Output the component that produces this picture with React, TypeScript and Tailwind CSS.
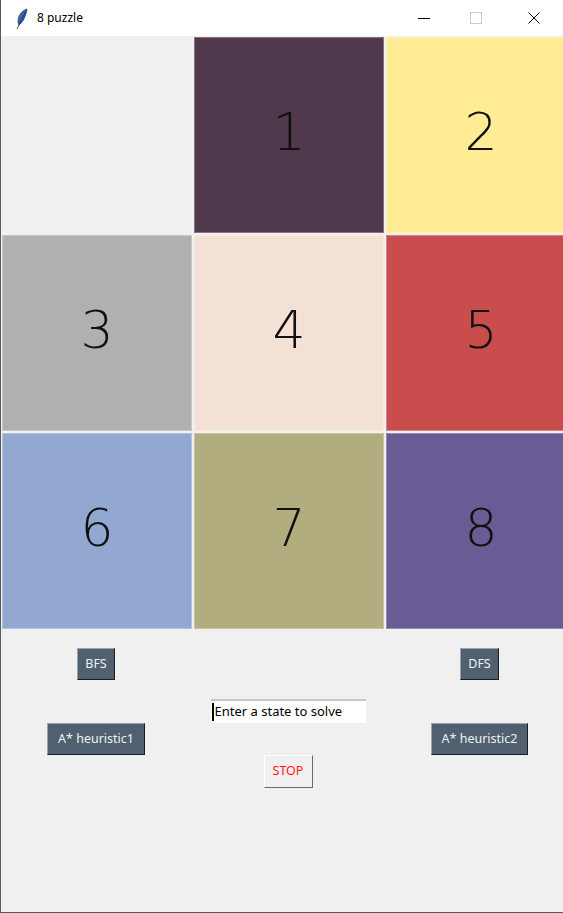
import React from "react";

const tiles: { n: string; bg: string }[] = [
  { n: "", bg: "bg-[#f0f0f0]" },
  { n: "1", bg: "bg-[#50394c]" },
  { n: "2", bg: "bg-[#ffec94]" },
  { n: "3", bg: "bg-[#b0b0b0]" },
  { n: "4", bg: "bg-[#f4e1d5]" },
  { n: "5", bg: "bg-[#c94d4d]" },
  { n: "6", bg: "bg-[#93a8d1]" },
  { n: "7", bg: "bg-[#b1ad7e]" },
  { n: "8", bg: "bg-[#6b5b95]" },
];

function Feather() {
  return (
    <svg width="14" height="22" viewBox="0 0 14 22">
      <path d="M12 1 C6 3 3 8 3 14 L4 17 C8 14 11 8 12 1 Z" fill="#3a68ad" stroke="#1f3f70" strokeWidth="0.8" />
      <path d="M11 3 L3 19" stroke="#1a2f55" strokeWidth="0.9" />
      <path d="M3 19 L2 21" stroke="#555" strokeWidth="1" />
    </svg>
  );
}

function TitleBar() {
  return (
    <div className="h-[36px] bg-white flex items-center relative">
      <div className="ml-[14px] mt-[1px]">
        <Feather />
      </div>
      <span className="ml-[8px] text-[12px] text-black font-sans">8 puzzle</span>
      <div className="ml-auto flex items-center h-full">
        <div className="w-[46px] flex justify-center">
          <div className="w-[12px] h-px bg-black" />
        </div>
        <div className="w-[58px] flex justify-center">
          <div className="w-[12px] h-[12px] border border-[#cccccc]" />
        </div>
        <div className="w-[58px] flex justify-center">
          <svg width="12" height="12" viewBox="0 0 12 12">
            <path d="M0.5 0.5 L11.5 11.5 M11.5 0.5 L0.5 11.5" stroke="#000" strokeWidth="1" />
          </svg>
        </div>
      </div>
    </div>
  );
}

function DarkButton({ label, w }: { label: string; w: string }) {
  return (
    <div
      className={`${w} h-[32px] bg-[#506070] border-[1.5px] border-t-[#9aa4ae] border-l-[#9aa4ae] border-b-[#1c1c1c] border-r-[#1c1c1c] flex items-center justify-center text-[12.5px] text-[#eef2f5] font-sans`}
    >
      {label}
    </div>
  );
}

export default function App() {
  return (
    <div className="w-[563px] h-[913px] overflow-hidden bg-[#f0f0f0] border-l border-b border-[#5a5a5a] flex flex-col">
      <TitleBar />
      <div className="grid grid-cols-[192px_192px_192px] w-[576px]">
        {tiles.map((t, i) => (
          <div key={i} className="h-[198px] p-px">
            <div
              className={`${t.bg} h-full pb-[6px] ${t.n ? "border border-[#ffffff]/30" : ""} flex items-center justify-center text-[52px] text-[#111] font-['DejaVu_Sans'] font-extralight leading-none`}
            >
              {t.n}
            </div>
          </div>
        ))}
      </div>
      <div className="grid grid-cols-[192px_192px_192px] w-[576px]">
        <div className="flex flex-col items-center pt-[18px] gap-[43px] -ml-[2px]">
          <DarkButton label="BFS" w="w-[38px]" />
          <DarkButton label="A* heuristic1" w="w-[98px]" />
        </div>
        <div className="flex flex-col items-center pt-[69px] -ml-[2px]">
          <div className="w-[155px] h-[24px] bg-white border-t-2 border-[#c8c8c8] flex items-center pl-[1px] text-[13px] text-black font-sans">
            <span className="w-[2px] h-[18px] bg-black mr-px" />
            Enter a state to solve
          </div>
          <div className="mt-[32px] w-[49px] h-[33px] bg-[#f0f0f0] border-[1.5px] border-t-white border-l-white border-b-[#6a6a6a] border-r-[#6a6a6a] flex items-center justify-center text-[12.5px] text-[#ff1a1a] font-sans">
            STOP
          </div>
        </div>
        <div className="flex flex-col items-center pt-[18px] gap-[43px] pr-[3px]">
          <DarkButton label="DFS" w="w-[39px]" />
          <DarkButton label="A* heuristic2" w="w-[97px]" />
        </div>
      </div>
    </div>
  );
}
